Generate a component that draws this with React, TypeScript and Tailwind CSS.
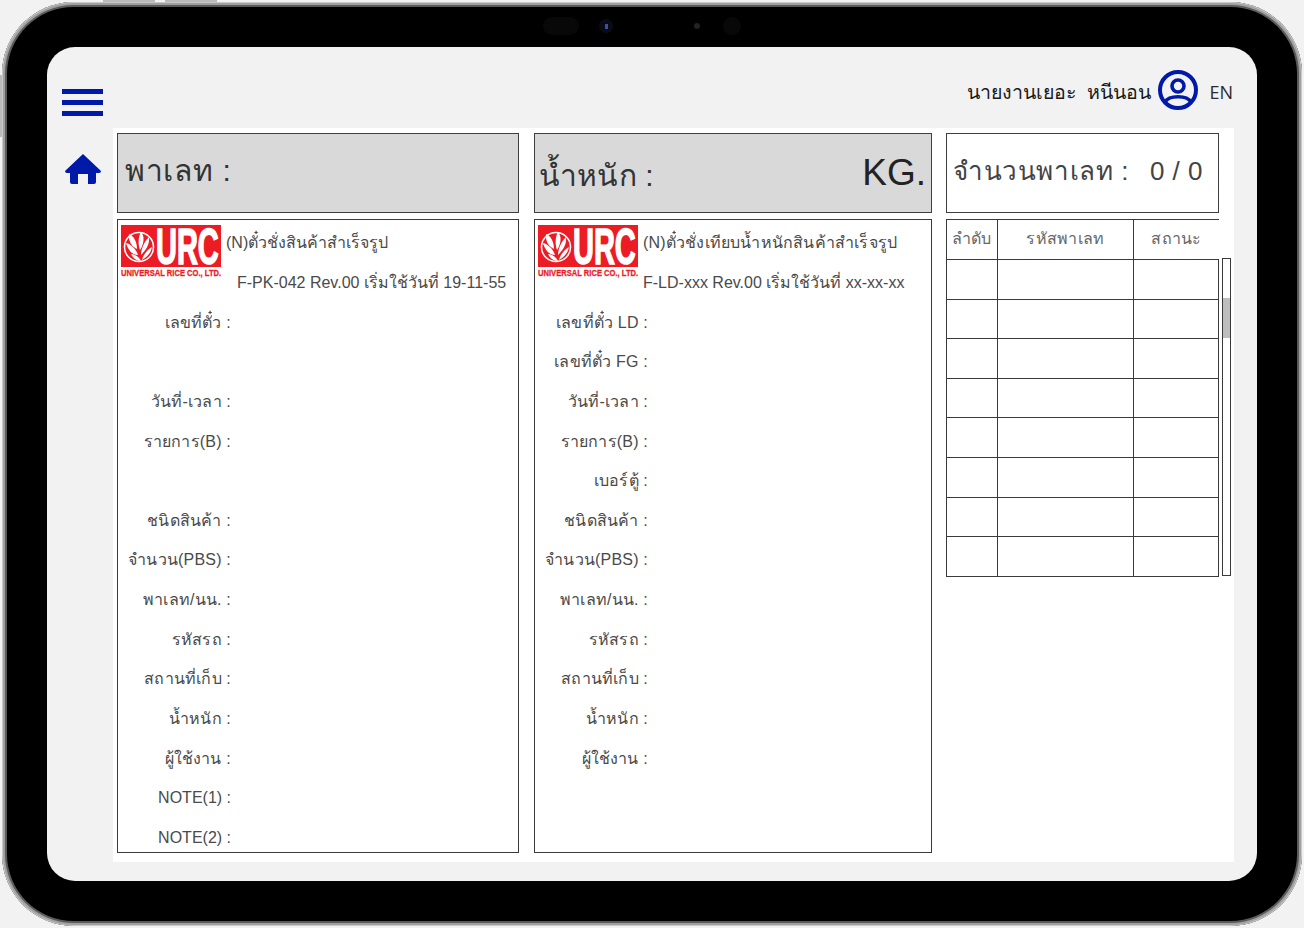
import React from "react";

function Logo() {
  return (
    <svg width="100" height="54" viewBox="0 0 100 54" className="shrink-0">
      <rect x="0" y="0" width="100" height="42" fill="#ed1c24" />
      <circle cx="18" cy="22" r="14.5" fill="none" stroke="#fff" strokeWidth="1.6" />
      <g fill="#fff">
        <path d="M8 9 C13 11 16 17 16 24 C11 22 7 16 8 9Z" />
        <path d="M5 18 C10 19 15 24 17 30 C11 30 7 25 5 18Z" />
        <path d="M10 29 C14 29 18 32 20 36 C15 36 12 33 10 29Z" />
        <path d="M20 7 C24 11 23 19 19 25 C17 20 17 12 20 7Z" />
        <path d="M28 12 C29 19 25 25 20 30 C20 24 23 17 28 12Z" />
        <path d="M31 22 C30 28 26 32 21 35 C22 30 26 25 31 22Z" />
      </g>
      <text transform="translate(35 39) scale(0.58 1)" fontFamily="'Liberation Sans', sans-serif" fontWeight="700" fontSize="50" fill="#fff" stroke="#fff" strokeWidth="1.6">URC</text>
      <text transform="translate(0 51) scale(0.8 1)" fontFamily="'Liberation Sans', sans-serif" fontWeight="700" fontSize="9.5" fill="#ed1c24" stroke="#ed1c24" strokeWidth="0.3">UNIVERSAL RICE CO., LTD.</text>
    </svg>
  );
}

const rows1 = ["เลขที่ตั๋ว :", "", "วันที่-เวลา :", "รายการ(B) :", "", "ชนิดสินค้า :", "จำนวน(PBS) :", "พาเลท/นน. :", "รหัสรถ :", "สถานที่เก็บ :", "น้ำหนัก :", "ผู้ใช้งาน :", "NOTE(1) :", "NOTE(2) :"];
const rows2 = ["เลขที่ตั๋ว LD :", "เลขที่ตั๋ว FG :", "วันที่-เวลา :", "รายการ(B) :", "เบอร์ตู้ :", "ชนิดสินค้า :", "จำนวน(PBS) :", "พาเลท/นน. :", "รหัสรถ :", "สถานที่เก็บ :", "น้ำหนัก :", "ผู้ใช้งาน :"];

function Form({ title, titleClass, code, codeClass, rows }: { title: string; titleClass: string; code: string; codeClass: string; rows: string[] }) {
  return (
    <div className="mt-[6px] h-[634px] w-full border border-[#3a3a3a] text-[#4a4a4a]">
      <div className="flex h-[82.6px] pl-[3px] pt-[5px]">
        <Logo />
        <div className="flex-1 text-[16px] leading-[20px]">
          <div className={titleClass}>{title}</div>
          <div className={codeClass}>{code}</div>
        </div>
      </div>
      <div className="flex flex-col">
        {rows.map((r, i) => (
          <div key={i} className={`h-[39.65px] w-[113px] text-right text-[16px] leading-[39px] whitespace-nowrap ${r.startsWith("NOTE") ? "" : "tracking-[0.2px]"}`}>
            {r}
          </div>
        ))}
      </div>
    </div>
  );
}

function TopBox({ children, grey = true }: { children: React.ReactNode; grey?: boolean }) {
  return (
    <div className={`flex h-[80px] items-center justify-between border border-[#3f3f3f] ${grey ? "bg-[#d9d9d9]" : "bg-white"}`}>
      {children}
    </div>
  );
}

export default function App() {
  return (
    <div className="h-[928px] w-[1304px] overflow-hidden bg-[#f2f2f2] font-['Liberation_Sans',sans-serif] p-[2px]">
      <div className="relative h-[924px] w-[1300px] rounded-[72px] bg-black p-[45px] shadow-[inset_0_0_0_1px_#c8c8c8,inset_0_0_0_3px_#a0a0a0,inset_0_0_0_5px_#5a5a5a]">
        <div className="absolute left-[101px] top-[-2px] h-[2px] w-[52px] bg-[#bbb]" />
        <div className="absolute left-[163px] top-[-2px] h-[2px] w-[52px] bg-[#bbb]" />
        <div className="absolute left-[-2px] top-[73px] h-[62px] w-[2px] bg-[#bbb]" />
        <div className="absolute left-[541px] top-[15px] h-[18px] w-[36px] rounded-full bg-[#080808]" />
        <div className="absolute left-[597px] top-[17px] flex h-[14px] w-[14px] items-center justify-center rounded-full bg-[#0b0b16]">
          <div className="h-[5px] w-[3px] bg-[#3352b0]" />
        </div>
        <div className="absolute left-[692px] top-[21px] h-[6px] w-[6px] rounded-full bg-[#222]" />
        <div className="absolute left-[721px] top-[15px] h-[18px] w-[18px] rounded-full bg-[#080808]" />

        <div className="flex h-[834px] w-[1210px] overflow-hidden rounded-[28px] bg-[#f2f2f2]">
          <div className="flex w-[66px] shrink-0 flex-col items-start pl-[15px] pt-[42px]">
            <div className="flex h-[27px] w-[41px] flex-col justify-between">
              <div className="h-[5px] bg-[#0019a8]" />
              <div className="h-[5px] bg-[#0019a8]" />
              <div className="h-[5px] bg-[#0019a8]" />
            </div>
            <svg width="38" height="32" viewBox="0 0 38 32" className="mt-[37px] ml-[2px]">
              <path fill="#0019a8" d="M19 1 L37 18 Q37 20 35 20 L32 20 L32 29 Q32 31 30 31 L24 31 L24 21 L14 21 L14 31 L8 31 Q6 31 6 29 L6 20 L3 20 Q1 20 1 18 Z" />
            </svg>
          </div>
          <div className="flex flex-1 flex-col">
            <div className="flex h-[81px] items-center justify-end pr-[24px] pt-[9px]">
              <span className="text-[19.6px] whitespace-pre text-[#1a1a1a] font-['Noto_Sans',sans-serif]">นายงานเยอะ  หนีนอน</span>
              <svg width="40" height="40" viewBox="0 0 40 40" className="ml-[7px] mt-[-5px]">
                <circle cx="20" cy="20" r="18" fill="none" stroke="#0019a8" strokeWidth="4" />
                <circle cx="20" cy="16" r="6" fill="none" stroke="#0019a8" strokeWidth="3.6" />
                <path d="M7 32 C11 25 29 25 33 32" fill="none" stroke="#0019a8" strokeWidth="3.6" />
              </svg>
              <span className="ml-[11px] text-[18px] text-[#2a2a2a] font-['Open_Sans',sans-serif]">EN</span>
            </div>
            <div className="flex h-[734px] w-[1121px] bg-white pl-[4px] pt-[5px]">
              <div className="w-[402px]">
                <TopBox>
                  <span className="pb-[6px] pl-[7px] text-[30px] tracking-[0.7px] text-[#333]">พาเลท :</span>
                </TopBox>
                <Form title="(N)ตั๋วชั่งสินค้าสำเร็จรูป" titleClass="pl-[5px] pt-[8px]" code="F-PK-042 Rev.00 เริ่มใช้วันที่ 19-11-55" codeClass="pl-[16px] pt-[20px]" rows={rows1} />
              </div>
              <div className="ml-[15px] w-[398px]">
                <TopBox>
                  <span className="pl-[4px] pt-[5px] text-[30px] tracking-[0.2px] text-[#333]">น้ำหนัก :</span>
                  <span className="pr-[5px] text-[37px] text-[#222]">KG.</span>
                </TopBox>
                <Form title="(N)ตั๋วชั่งเทียบน้ำหนักสินค้าสำเร็จรูป" titleClass="pl-[5px] pt-[8px] tracking-[0.2px]" code="F-LD-xxx Rev.00 เริ่มใช้วันที่ xx-xx-xx" codeClass="pl-[5px] pt-[20px]" rows={rows2} />
              </div>
              <div className="ml-[14px] w-[285px]">
                <div className="w-[273px]">
                  <TopBox grey={false}>
                    <span className="whitespace-pre pb-[3px] pl-[6px] text-[26px] tracking-[0.6px] text-[#444]">จำนวนพาเลท :</span>
                    <span className="whitespace-pre pb-[3px] pr-[15px] text-[26px] tracking-[0.5px] text-[#444]">0 / 0</span>
                  </TopBox>
                </div>
                <div className="mt-[6px] flex items-start">
                  <div className="w-[273px] border-t border-l border-[#3a3a3a]">
                    <div className="flex h-[40px] text-center text-[16px] leading-[38px] text-[#666]">
                      <div className="w-[51px] border-r border-b border-[#3a3a3a] pr-[1px] tracking-[0.3px]">ลำดับ</div>
                      <div className="w-[136px] border-r border-b border-[#3a3a3a] tracking-[0.3px]">รหัสพาเลท</div>
                      <div className="flex-1 border-b border-[#3a3a3a] tracking-[0.3px]">สถานะ</div>
                    </div>
                    {[0, 1, 2, 3, 4, 5, 6, 7].map((i) => (
                      <div key={i} className="flex h-[39.6px]">
                        <div className="w-[51px] border-r border-b border-[#3a3a3a]" />
                        <div className="w-[136px] border-r border-b border-[#3a3a3a]" />
                        <div className="flex-1 border-r border-b border-[#3a3a3a]" />
                      </div>
                    ))}
                  </div>
                  <div className="ml-[3px] mt-[39px] h-[318px] w-[9px] border border-[#3a3a3a] pt-[39px]">
                    <div className="h-[40px] bg-[#bdbdbd]" />
                  </div>
                </div>
              </div>
            </div>
          </div>
        </div>
      </div>
    </div>
  );
}
